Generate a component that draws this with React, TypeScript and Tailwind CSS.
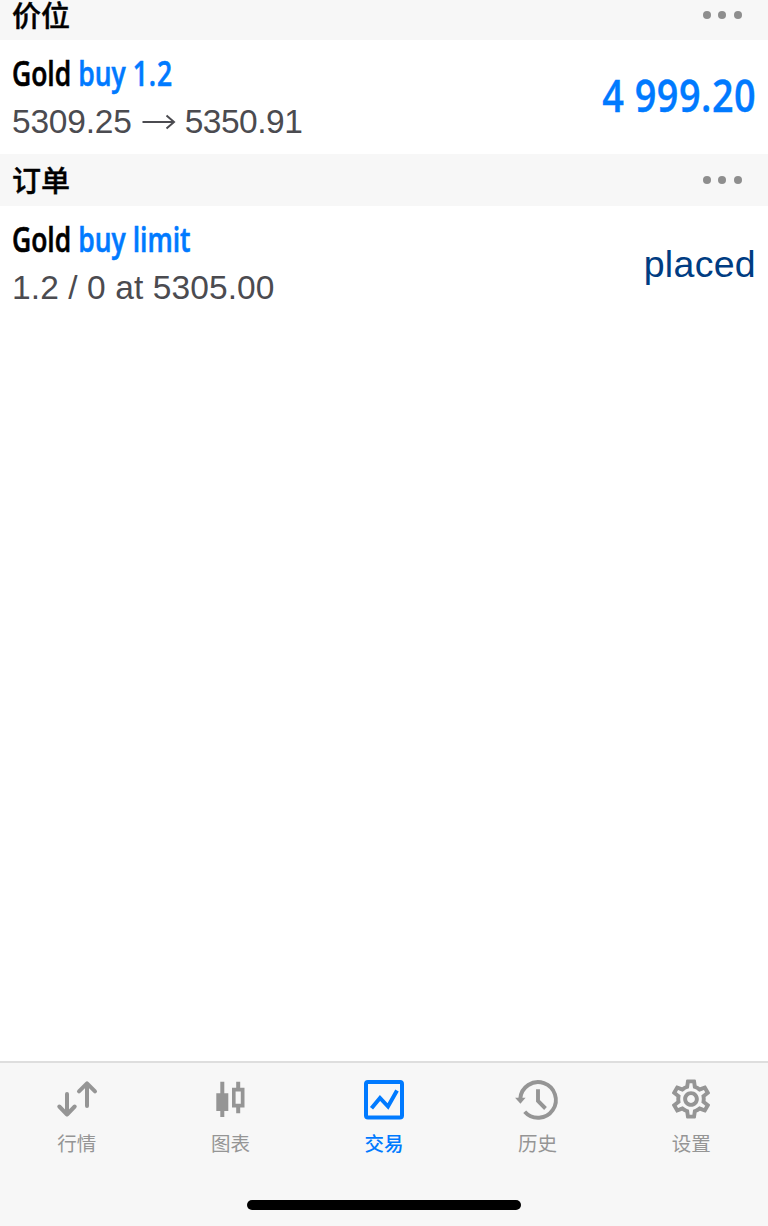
import React from 'react';
import { MdOutlineSettings } from 'react-icons/md';

interface TradeRow {
  id: string;
  symbol: string;
  action: React.ReactNode;
  details: React.ReactNode;
  value: React.ReactNode;
}

interface Tab {
  id: string;
  label: string;
  icon: React.ReactNode;
}

const QuotesIcon = () => (
  <svg viewBox="0 0 48 48" className="w-12 h-12" fill="none" stroke="currentColor" strokeWidth="4" strokeLinecap="round" strokeLinejoin="round">
    <path d="M14 19V39.500M6.300 31.500l7.700 8 7.700-8" />
    <path d="M34 31V8.800M26 16.300l8-8 8 8" />
  </svg>
);

const CandlesIcon = () => (
  <svg viewBox="0 0 48 48" className="w-12 h-12" fill="currentColor">
    <path d="M14.300 6.700h4v11.600h4V36h-4v6h-4v-6h-4V18.300h4z" />
    <path fillRule="evenodd" d="M30.200 6.700h4v6h4.300v19.800h-4.300v5.800h-4v-5.800H26V12.700h4.200zM29.600 16.500v12.300h5.200V16.500z" />
  </svg>
);

const TradeIcon = () => (
  <svg viewBox="0 0 48 48" className="w-12 h-12" fill="none" stroke="currentColor" strokeWidth="4">
    <rect x="6" y="7" width="36" height="35.500" rx="2" />
    <path d="M11.500 33.300L20 23l8 8.500L37 15.500" />
  </svg>
);

const HistoryIcon = () => (
  <svg viewBox="0 0 48 48" className="w-12 h-12" fill="none" stroke="currentColor" strokeWidth="3.9">
    <path d="M6.300 23.500A17.800 17.800 0 1 1 10.700 36.700" />
    <path d="M24 14.300V26l7.500 7.500" />
    <path d="M1.100 22.700h10.500l-5.200 6z" fill="currentColor" stroke="none" />
  </svg>
);

const rowsPositions: TradeRow[] = [
  {
    id: 'position-1',
    symbol: 'Gold',
    action: (
      <>
        buy <span className="tracking-[1.2px]">1.2</span>
      </>
    ),
    details: (
      <>
        <span className="tracking-[-0.2px]">5309.25</span>
        <svg viewBox="0 0 34 20" className="w-[34px] h-5 ml-[10px] mr-[9px]" fill="none" stroke="currentColor" strokeWidth="2">
          <path d="M0.500 10H32M24.500 3.500L32 10l-7.500 6.500" />
        </svg>
        <span className="tracking-[-0.5px]">5350.91</span>
      </>
    ),
    value: (
      <span className="-mt-[4px] origin-right scale-x-[0.84] font-['Open_Sans'] text-[45px] font-semibold tracking-[0.6px] text-[#007aff] [-webkit-text-stroke:0.4px]">
        4 999.20
      </span>
    ),
  },
];

const rowsOrders: TradeRow[] = [
  {
    id: 'order-1',
    symbol: 'Gold',
    action: 'buy limit',
    details: <span className="tracking-[0.1px]">1.2 / 0 at 5305.00</span>,
    value: (
      <span className="mt-[3px] font-['Liberation_Sans'] text-[37.5px] tracking-[0.3px] text-[#003c82]">placed</span>
    ),
  },
];

const tabs: Tab[] = [
  { id: 'quotes', label: '行情', icon: <QuotesIcon /> },
  { id: 'charts', label: '图表', icon: <CandlesIcon /> },
  { id: 'trade', label: '交易', icon: <TradeIcon /> },
  { id: 'history', label: '历史', icon: <HistoryIcon /> },
  { id: 'settings', label: '设置', icon: <MdOutlineSettings className="w-12 h-12 p-[0.5px]" /> },
];

const SectionHeader = ({ title }: { title: string }) => (
  <div className="flex h-[52px] shrink-0 items-center justify-between bg-[#f7f7f7] pl-3 pr-[26px]">
    <h2 className="pb-[2px] font-['Noto_Sans_CJK_SC',sans-serif] text-[29px] font-medium leading-none text-black [-webkit-text-stroke:0.4px_#000]">
      {title}
    </h2>
    <button className="flex gap-[7.7px]" aria-label={title}>
      {[0, 1, 2].map((i) => (
        <span key={i} className="h-2 w-2 rounded-full bg-[#8e8e8e]"></span>
      ))}
    </button>
  </div>
);

const Row = ({ row }: { row: TradeRow }) => (
  <div className="flex h-[114px] shrink-0 items-center justify-between bg-white px-3">
    <div>
      <div className="flex h-[48px] origin-left scale-x-[0.79] items-center gap-[9px] whitespace-nowrap pb-[2px] font-['Open_Sans'] text-[33.5px] font-semibold [-webkit-text-stroke:0.6px]">
        <span className="text-black">{row.symbol}</span>
        <span className="text-[#007aff]">{row.action}</span>
      </div>
      <div className="flex h-[46px] items-center pt-[2px] font-['Liberation_Sans'] text-[33.5px] text-[#4b4b50]">
        {row.details}
      </div>
    </div>
    {row.value}
  </div>
);

const App: React.FC = () => {
  const activeTab = 'trade';

  return (
    <div className="flex h-[1226px] w-[768px] flex-col overflow-hidden bg-white">
      {/* Positions */}
      <div className="h-10 shrink-0 overflow-hidden">
        <div className="-mt-[11px]">
          <SectionHeader title="价位" />
        </div>
      </div>
      {rowsPositions.map((row) => (
        <Row key={row.id} row={row} />
      ))}

      {/* Orders */}
      <SectionHeader title="订单" />
      {rowsOrders.map((row) => (
        <Row key={row.id} row={row} />
      ))}

      {/* Tab bar */}
      <nav className="mt-auto flex h-[165px] flex-col items-center border-t-2 border-[#dedede] bg-[#f7f7f7]">
        <div className="grid w-full grid-cols-5 pt-3">
          {tabs.map((tab) => (
            <button
              key={tab.id}
              className={`flex flex-col items-center ${tab.id === activeTab ? 'font-medium text-[#007aff]' : 'text-[#959595]'}`}
            >
              {tab.icon}
              <span className="mt-[6px] font-['Noto_Sans_CJK_SC',sans-serif] text-[19.5px] leading-7">{tab.label}</span>
            </button>
          ))}
        </div>
        <div className="mt-auto mb-4 h-[10px] w-[274px] rounded-full bg-black"></div>
      </nav>
    </div>
  );
};

export default App;
